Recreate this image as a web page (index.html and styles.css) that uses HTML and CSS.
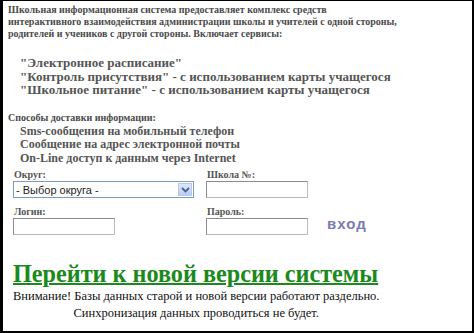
FILE: index.html
```html
<!DOCTYPE html>
<html lang="ru">

<head>
    <meta charset="UTF-8" />
    <title>Школьная информационная система</title>
    <link rel="stylesheet" href="styles.css">
</head>

<body>
    <div class="frame">

        <div class="intro">
            Школьная информационная система предоставляет комплекс средств<br />
            интерактивного взаимодействия администрации школы и учителей с одной стороны,<br />
            родителей и учеников с другой стороны. Включает сервисы:
        </div>

        <div class="services">
            "Электронное расписание"<br />
            "Контроль присутствия" - с использованием карты учащегося<br />
            "Школьное питание" - с использованием карты учащегося
        </div>

        <div class="delivery-title">Способы доставки информации:</div>
        <div class="services delivery">
            Sms-сообщения на мобильный телефон<br />
            Сообщение на адрес электронной почты<br />
            On-Line доступ к данным через Internet
        </div>

        <!-- Login form -->
        <form class="login">
            <div class="field">
                <label>Округ:</label>
                <div class="select">
                    <span>- Выбор округа -</span>
                    <span class="select-btn">
                        <svg width="9" height="6" viewBox="0 0 9 6">
                            <path d="M1 1 L4.5 4.5 L8 1" fill="none" stroke="#4d6185" stroke-width="1.8" />
                        </svg>
                    </span>
                </div>
            </div>
            <div class="field">
                <label>Школа №:</label>
                <input type="text" />
            </div>
            <div class="spacer"></div>

            <div class="field">
                <label>Логин:</label>
                <input type="text" />
            </div>
            <div class="field">
                <label>Пароль:</label>
                <input type="password" />
            </div>
            <div class="enter">вход</div>
        </form>

        <a class="new-version" href="#">Перейти к новой версии системы</a>

        <div class="notice">
            Внимание! Базы данных старой и новой версии работают раздельно.<br />
            Синхронизация данных проводиться не будет.
        </div>

    </div>
</body>

</html>
```

FILE: styles.css
```css
body {
    margin: 0;
    padding: 0;
    background: #fff;
}

.frame {
    box-sizing: border-box;
    width: 474px;
    height: 333px;
    border-style: solid;
    border-color: #000;
    border-width: 1px 2px 2px 3px;
    padding: 3px 0 0 5px;
    font-family: "Liberation Serif", serif;
    overflow: hidden;
}

.intro {
    font-size: 10px;
    line-height: 12px;
    font-weight: bold;
    color: #4a4a4a;
}

.services {
    margin: 16px 0 0 12px;
    font-size: 13px;
    line-height: 13.5px;
    font-weight: bold;
    color: #555;
}

.delivery-title {
    margin-top: 15px;
    font-size: 10px;
    line-height: 12px;
    font-weight: bold;
    color: #4a4a4a;
}

.delivery {
    margin-top: 1px;
    font-size: 12px;
}

.login {
    display: grid;
    grid-template-columns: 193px 121px auto;
    row-gap: 9px;
    margin: 5px 0 0 5px;
}

.field {
    display: flex;
    flex-direction: column;
    gap: 1px;
    align-items: flex-start;
}

.field label {
    font-size: 10px;
    line-height: 10px;
    font-weight: bold;
    color: #555;
    padding-left: 1px;
}

.field input {
    box-sizing: border-box;
    width: 102px;
    height: 17px;
    margin: 0;
    border: 1px solid #8c8c8c;
    border-right-color: #bbb;
    border-bottom-color: #bbb;
    padding: 0 2px;
}

.select {
    box-sizing: border-box;
    width: 181px;
    height: 17px;
    border: 1px solid #7f9db9;
    display: flex;
    justify-content: space-between;
    align-items: center;
    font-family: "Liberation Sans", sans-serif;
    font-size: 11px;
    color: #222;
    padding-left: 2px;
}

.select-btn {
    width: 14px;
    height: 13px;
    margin-right: 1px;
    background: linear-gradient(#dde8fb, #b9ccf3);
    border: 1px solid #b8c9ee;
    box-sizing: border-box;
    display: flex;
    align-items: center;
    justify-content: center;
}

.enter {
    align-self: end;
    margin-bottom: 3px;
    font-family: "Liberation Sans", sans-serif;
    font-size: 15px;
    font-weight: bold;
    color: #7b7bb5;
    letter-spacing: 1px;
}

.new-version {
    display: inline-block;
    margin: 27px 0 0 5px;
    font-size: 24.2px;
    line-height: 24px;
    font-weight: bold;
    color: #1b8a1b;
    text-decoration-thickness: 2px;
}

.notice {
    display: inline-block;
    margin: 2px 0 0 5px;
    font-size: 12.5px;
    line-height: 16.5px;
    color: #111;
    text-align: center;
}
```
